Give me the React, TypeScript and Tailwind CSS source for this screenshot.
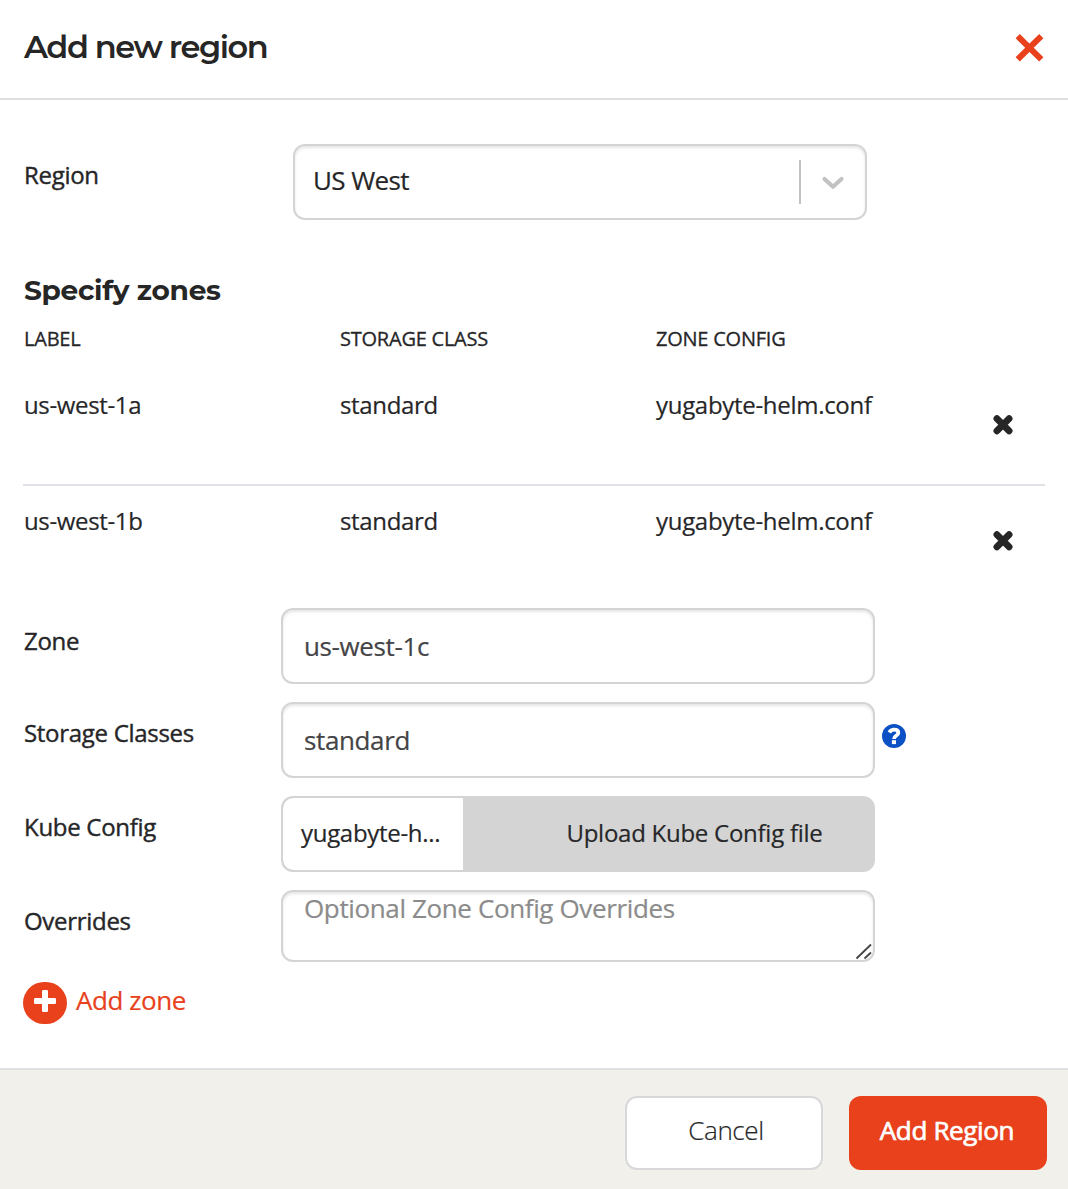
import React from "react";

const labelText = "w-[257px] shrink-0 text-[24px] leading-[32px] tracking-[-0.3px] [-webkit-text-stroke:0.4px_#262628]";
const control =
  "w-[594px] shrink-0 rounded-[12px] border-2 border-[#d4d4d4] bg-white text-[26px] tracking-[-0.37px] text-[#444446] shadow-[inset_0_2px_3px_rgba(0,0,0,0.1)] outline-none [-webkit-text-stroke:0.2px]";

function RowCross() {
  return (
    <svg width="20" height="20" viewBox="0 0 20 20" className="overflow-visible text-[#262626]">
      <path
        d="M3.9 3.7L16.1 15.9M16.1 3.7L3.9 15.9"
        stroke="currentColor"
        strokeWidth="6.8"
        strokeLinecap="round"
      />
    </svg>
  );
}

function CloseCross() {
  return (
    <svg width="28" height="28" viewBox="0 0 28 28" className="overflow-visible text-[#e8411c]">
      <path d="M2.7 2.1L26.3 25.3M26.3 2.1L2.7 25.3" stroke="currentColor" strokeWidth="6" />
    </svg>
  );
}

function HelpIcon() {
  return (
    <svg width="24" height="24" viewBox="0 0 24 24">
      <circle cx="12" cy="12" r="12" fill="#0b50c5" />
      <path
        d="M7.3 8.4C8.5 6.5 10 5.7 12 5.7C14.8 5.7 16.3 7.1 16.3 8.9C16.3 11.6 12 11.6 12 15"
        fill="none"
        stroke="#fff"
        strokeWidth="3.8"
      />
      <rect x="9.9" y="16.2" width="4.1" height="3.9" fill="#fff" />
    </svg>
  );
}

function ZoneRow({ name, last }: { name: string; last?: boolean }) {
  return (
    <div
      className={`ml-[23px] mr-[23px] grid h-[116px] grid-cols-[316px_316px_337px_1fr] pl-px pt-[19px] text-[24px] leading-[32px] tracking-[-0.35px] [-webkit-text-stroke:0.2px] ${
        last ? "" : "border-b-2 border-[#e0e0e6]"
      }`}
    >
      <span>{name}</span>
      <span>standard</span>
      <span className="tracking-[-0.3px]">yugabyte-helm.conf</span>
      <button className="mt-[26px] h-5 w-5" aria-label="Remove zone">
        <RowCross />
      </button>
    </div>
  );
}

export default function App() {
  return (
    <div className="flex h-[1189px] w-[1068px] flex-col overflow-hidden bg-white font-['Open_Sans',sans-serif] text-[#262628]">
      <header className="flex h-[100px] shrink-0 items-start justify-between border-b-2 border-[#dfdfdf] pl-6 pr-[25px]">
        <h1 className="pt-[27px] font-['Montserrat',sans-serif] text-[32px] font-semibold leading-[40px] tracking-[-1.45px] text-[#262626]">
          Add new region
        </h1>
        <button className="mt-[34px] h-7 w-7" aria-label="Close">
          <CloseCross />
        </button>
      </header>

      <main className="flex h-[968px] shrink-0 flex-col">
        <div className="mt-[44px] flex h-[76px] pl-6">
          <label className={`${labelText} pt-[15px]`}>Region</label>
          <div className="ml-3 flex h-[76px] w-[574px] items-center rounded-[12px] border-2 border-[#d4d4d4] shadow-[inset_0_2px_3px_rgba(0,0,0,0.1)]">
            <span className="flex-1 pb-1 pl-[18px] text-[26px] leading-[36px] tracking-[-0.6px] [-webkit-text-stroke:0.2px]">US West</span>
            <span className="h-11 w-0.5 bg-[#c2c2c2]" />
            <span className="flex w-16 justify-center">
              <svg width="24" height="16" viewBox="0 0 24 16" className="translate-y-px">
                <path d="M3.5 4L12 11.7L20.5 4" fill="none" stroke="#c2c2c2" strokeWidth="4.2" strokeLinecap="round" strokeLinejoin="round" />
              </svg>
            </span>
          </div>
        </div>

        <h2 className="mt-[51px] pl-6 font-['Montserrat',sans-serif] text-[28px] font-bold leading-[38px] tracking-[-0.3px] text-[#262626]">
          Specify zones
        </h2>
        <div className="mt-[17px] grid h-[44px] grid-cols-[316px_316px_1fr] pl-6 text-[20px] leading-[26px] tracking-[-0.23px] [-webkit-text-stroke:0.3px]">
          <span>LABEL</span>
          <span>STORAGE CLASS</span>
          <span>ZONE CONFIG</span>
        </div>
        <ZoneRow name="us-west-1a" />
        <ZoneRow name="us-west-1b" last />

        <div className="mt-1.5 flex flex-col gap-[18px] pl-6">
          <div className="flex h-[76px]">
            <label className={`${labelText} pt-[17px]`}>Zone</label>
            <input className={`${control} h-[76px] px-[21px]`} defaultValue="us-west-1c" />
          </div>
          <div className="flex h-[76px]">
            <label className={`${labelText} pt-[15px]`}>Storage Classes</label>
            <input className={`${control} h-[76px] px-[21px]`} defaultValue="standard" />
            <span className="ml-[7px] mt-[22px]">
              <HelpIcon />
            </span>
          </div>
          <div className="flex h-[76px]">
            <label className={`${labelText} pt-[15px]`}>Kube Config</label>
            <div className="flex h-[76px] w-[594px] overflow-hidden rounded-[12px] border-2 border-[#d4d4d4] bg-[#d4d4d4] text-[24px] leading-[32px] tracking-[-0.3px] [-webkit-text-stroke:0.2px]">
              <span className="w-[180px] rounded-l-[10px] bg-white pl-[18px] pt-[19px]">yugabyte-h...</span>
              <button className="flex-1 pb-0.5 pl-[53px] text-center tracking-[-0.26px]">Upload Kube Config file</button>
            </div>
          </div>
          <div className="flex h-[72px]">
            <label className={`${labelText} pt-[15px]`}>Overrides</label>
            <div className="relative h-[72px]">
              <textarea
                className={`${control} block h-[72px] resize-none overflow-hidden px-[21px] py-0 leading-[32px] placeholder:text-[#8b8b8b]`}
                placeholder="Optional Zone Config Overrides"
              />
              <svg width="18" height="18" viewBox="0 0 18 18" className="absolute bottom-0.5 right-0.5">
                <path d="M1.5 16.5L16 2.5M9.5 16.5L16 10.5" stroke="#444" strokeWidth="1.8" />
              </svg>
            </div>
          </div>
        </div>

        <button className="ml-[23px] mt-5 flex h-[42px] w-fit items-center gap-[9px] text-[26px] leading-[36px] tracking-[-0.45px] text-[#e8411c] [-webkit-text-stroke:0.2px]">
          <span className="flex h-[42px] w-[44px] items-center justify-center rounded-[21px] bg-[#e8411c]">
            <svg width="22" height="22" viewBox="0 0 22 22" className="-translate-y-0.5" fill="#fff">
              <rect x="8" y="0" width="6" height="22" rx="1.3" />
              <rect x="0" y="8" width="22" height="6" rx="1.3" />
            </svg>
          </span>
          <span className="pb-1.5">Add zone</span>
        </button>
      </main>

      <footer className="flex flex-1 items-start justify-end gap-[26px] border-t-2 border-[#dfdfdf] bg-[#f1f0eb] pr-[21px] pt-[26px]">
        <button className="h-[74px] w-[198px] rounded-[12px] border-2 border-[#d8d8da] bg-white pb-1.5 pl-1 text-[26px] font-light tracking-[-0.4px] [-webkit-text-stroke:0.2px]">
          Cancel
        </button>
        <button className="h-[74px] w-[198px] rounded-[12px] bg-[#e8411c] pb-1.5 pr-0.5 text-[26px] tracking-[-0.35px] text-white [-webkit-text-stroke:0.7px_white]">
          Add Region
        </button>
      </footer>
    </div>
  );
}
